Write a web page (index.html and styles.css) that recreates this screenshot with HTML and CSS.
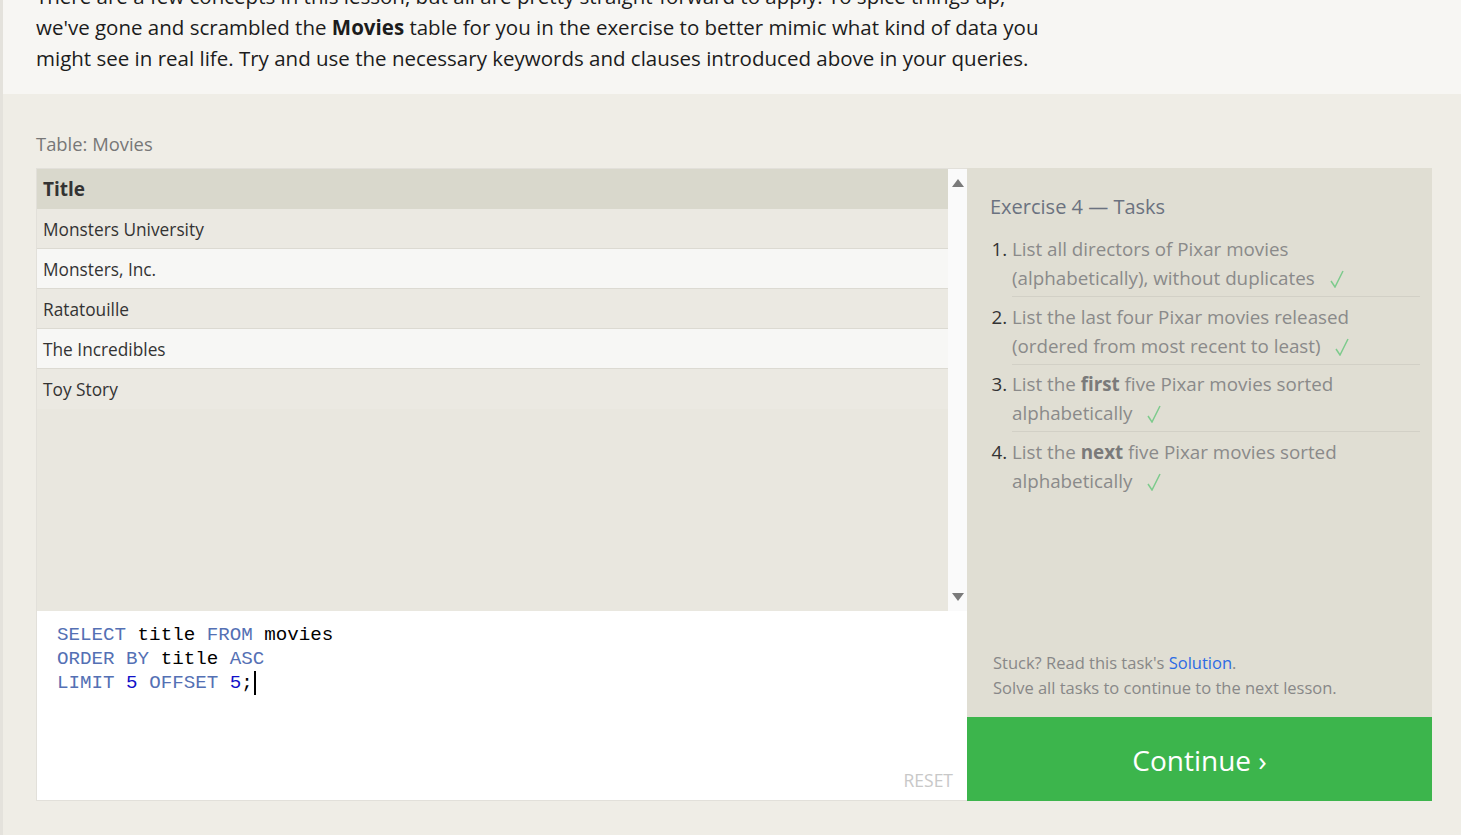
FILE: index.html
```html
<!DOCTYPE html>
<html>
<head>
<meta charset="utf-8">
<link rel="stylesheet" href="styles.css">
</head>
<body>
<div class="page">
  <section class="intro">
    <p>There are a few concepts in this lesson, but all are pretty straight-forward to apply. To spice things up, we've gone and scrambled the <strong>Movies</strong> table for you in the exercise to better mimic what kind of data you might see in real life. Try and use the necessary keywords and clauses introduced above in your queries.</p>
  </section>
  <section class="exercise">
    <div class="table-label">Table: Movies</div>
    <div class="workspace">
      <div class="left">
        <div class="viewer">
          <div class="rows">
            <div class="row head">Title</div>
            <div class="row odd">Monsters University</div>
            <div class="row even">Monsters, Inc.</div>
            <div class="row odd">Ratatouille</div>
            <div class="row even">The Incredibles</div>
            <div class="row odd">Toy Story</div>
          </div>
          <div class="scrollbar">
            <span class="arrow up"></span>
            <span class="arrow down"></span>
          </div>
        </div>
        <div class="editor">
          <pre class="code"><span class="kw">SELECT</span> title <span class="kw">FROM</span> movies
<span class="kw">ORDER</span> <span class="kw">BY</span> title <span class="kw">ASC</span>
<span class="kw">LIMIT</span> <span class="num">5</span> <span class="kw">OFFSET</span> <span class="num">5</span>;<span class="caret"></span></pre>
          <div class="reset">RESET</div>
        </div>
      </div>
      <div class="right">
        <div class="tasks">
          <h3>Exercise 4 — Tasks</h3>
          <ol class="task-list">
            <li>List all directors of Pixar movies (alphabetically), without duplicates <svg class="check" viewBox="0 0 14 18" width="14" height="18"><polyline points="1,11 5,17 13,1" /></svg></li>
            <li>List the last four Pixar movies released (ordered from most recent to least) <svg class="check" viewBox="0 0 14 18" width="14" height="18"><polyline points="1,11 5,17 13,1" /></svg></li>
            <li>List the <b>first</b> five Pixar movies sorted alphabetically <svg class="check" viewBox="0 0 14 18" width="14" height="18"><polyline points="1,11 5,17 13,1" /></svg></li>
            <li>List the <b>next</b> five Pixar movies sorted alphabetically <svg class="check" viewBox="0 0 14 18" width="14" height="18"><polyline points="1,11 5,17 13,1" /></svg></li>
          </ol>
          <div class="help">
            <div>Stuck? Read this task's <a href="#">Solution</a>.</div>
            <div>Solve all tasks to continue to the next lesson.</div>
          </div>
        </div>
        <a class="continue" href="#">Continue ›</a>
      </div>
    </div>
  </section>
</div>
</body>
</html>
```
FILE: styles.css
```css
html, body {
  margin: 0;
  padding: 0;
  height: 100%;
  overflow: hidden;
}
body {
  background: #efede6;
  font-family: "Open Sans", "Noto Sans", sans-serif;
  color: #222;
}
.page {
  border-left: 3px solid #e4e2dc;
  min-height: 100%;
}
.intro {
  background: #f7f6f3;
  height: 94px;
  padding: 0 0 0 33px;
  overflow: hidden;
}
.intro p {
  margin: -19px 0 0 0;
  width: 1012px;
  font-size: 20.5px;
  line-height: 31px;
  color: #1c1c1c;
}
.intro strong {
  font-weight: 700;
}
.exercise {
  padding: 0 29px 0 33px;
}
.table-label {
  padding-top: 38px;
  height: 36px;
  font-size: 18.4px;
  line-height: 24px;
  color: #777;
}
.workspace {
  display: flex;
}
.left {
  width: 931px;
  display: flex;
  flex-direction: column;
}
.viewer {
  height: 443px;
  display: flex;
  border-top: 1px solid #e2e0da;
  border-left: 1px solid #e2e0da;
  box-sizing: border-box;
}
.rows {
  flex: 1;
  background: #e9e7df;
}
.row {
  height: 40px;
  line-height: 41px;
  padding-left: 6px;
  font-size: 17.3px;
  color: #333;
  border-bottom: 1px solid #dcdad2;
  box-sizing: border-box;
}
.row.head {
  background: #d9d8cc;
  font-weight: 700;
  font-size: 19px;
  color: #333;
  border-bottom: none;
}
.row.odd {
  background: #ebe9e2;
}
.row.even {
  background: #f7f7f5;
}
.row:last-child {
  border-bottom: none;
}
.scrollbar {
  width: 19px;
  background: #fafafa;
  position: relative;
}
.arrow {
  position: absolute;
  left: 4px;
  width: 0;
  height: 0;
  border-left: 6px solid transparent;
  border-right: 6px solid transparent;
}
.arrow.up {
  top: 10px;
  border-bottom: 8px solid #7a7a7a;
}
.arrow.down {
  bottom: 10px;
  border-top: 8px solid #7a7a7a;
}
.editor {
  height: 190px;
  background: #fff;
  border-left: 1px solid #e2e0da;
  border-bottom: 1px solid #e2e0da;
  box-sizing: border-box;
  display: flex;
  flex-direction: column;
  padding: 12px 14px 8px 20px;
}
.code {
  margin: 0;
  flex: 1;
  font-family: "Liberation Mono", "DejaVu Sans Mono", monospace;
  font-size: 19.2px;
  line-height: 24px;
  color: #000;
}
.kw {
  color: #5470b4;
}
.num {
  color: #1010c8;
}
.caret {
  display: inline-block;
  width: 2px;
  height: 24px;
  background: #000;
  vertical-align: top;
  margin-left: 1px;
}
.reset {
  align-self: flex-end;
  font-size: 17.5px;
  color: #c8c8c8;
}
.right {
  width: 465px;
  display: flex;
  flex-direction: column;
}
.tasks {
  height: 549px;
  background: #e0ded3;
  box-sizing: border-box;
  padding: 24px 12px 17px 22px;
  display: flex;
  flex-direction: column;
}
.tasks h3 {
  margin: 0 0 13px 1px;
  font-weight: 400;
  font-size: 20px;
  line-height: 30px;
  color: #6b7280;
}
.task-list {
  margin: 0;
  padding: 0 0 0 23px;
  font-size: 18.8px;
  line-height: 29px;
  color: #8a8a8a;
}
.task-list li {
  padding: 0 0 3px 0;
  margin-bottom: 5.5px;
  border-bottom: 1px solid #d2d0c6;
}
.task-list li:last-child {
  border-bottom: none;
}
.task-list li::marker {
  color: #333;
}
.task-list b {
  color: #7a7a7a;
}
.check {
  margin-left: 10px;
  vertical-align: -3px;
  fill: none;
  stroke: #7dcb8c;
  stroke-width: 1.5;
}
.help {
  margin-top: auto;
  padding-left: 4px;
  font-size: 16.5px;
  line-height: 25px;
  color: #888;
}
.help a {
  color: #2d6be4;
  text-decoration: none;
}
.continue {
  height: 84px;
  background: #3cb54c;
  color: #fff;
  font-size: 28px;
  display: flex;
  align-items: center;
  justify-content: center;
  padding-top: 2px;
  box-sizing: border-box;
  text-decoration: none;
}
```
